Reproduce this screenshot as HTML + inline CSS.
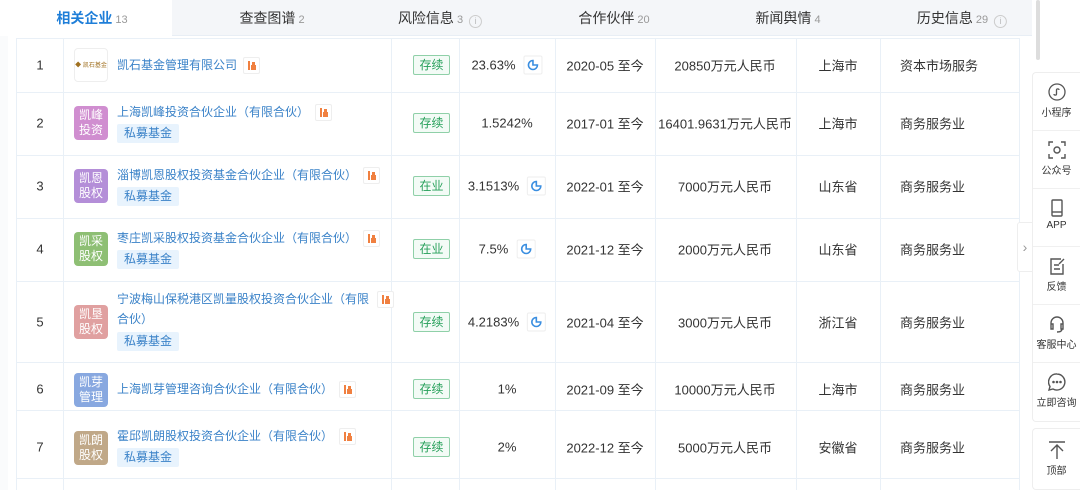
<!DOCTYPE html><html><head><meta charset="utf-8"><style>
*{margin:0;padding:0;box-sizing:border-box}
body{width:1080px;height:490px;overflow:hidden;background:#fff;font-family:"Liberation Sans","Noto Sans CJK SC",sans-serif;color:#333;font-size:13px;position:relative}
.tabs{position:absolute;left:0;top:0;width:1032px;height:36px;background:#f4f6f9;border-bottom:1px solid #e8eef5}
.tab{position:absolute;top:0;height:36px;line-height:36px;font-size:14px;color:#333;transform:translateX(-50%);white-space:nowrap}
.tab small{font-size:11px;color:#999;margin-left:3px}
.act{position:absolute;left:0;top:0;width:172px;height:37px;background:#fff}
.info{display:inline-block;width:13px;height:13px;border:1px solid #ccc;border-radius:50%;font-size:9px;line-height:11px;text-align:center;color:#bbb;margin-left:6px;vertical-align:-1px}
.vl{position:absolute;top:38px;height:452px;width:1px;background:#e9f0f7}
.hl{position:absolute;left:16px;width:1004px;height:1px;background:#e9f0f7}
.c{position:absolute;transform:translate(-50%,-50%);white-space:nowrap;display:flex;align-items:center}
.l{position:absolute;transform:translateY(-50%);white-space:nowrap}
.logo{position:absolute;left:74px;width:34px;height:34px;border-radius:4px;color:#fff;font-size:12px;line-height:15px;text-align:center;padding-top:2px}
.nm{position:absolute;left:117px;color:#3a82c8;font-size:12px;line-height:20px}
.ti{display:inline-block;width:17px;height:17px;border:1px solid #eee;border-radius:2px;vertical-align:middle;margin-left:6px;position:relative;background:#fff}
.ti:before{content:"";position:absolute;left:4px;top:3px;width:3px;height:9px;border-left:2px solid #f08040;}
.ti:after{content:"";position:absolute;left:7px;top:7px;width:5px;height:5px;background:#f08040;box-shadow:0 -4px 0 -1px #f08040}
.pf{position:absolute;left:117px;background:#e8f3fd;color:#3a82c8;font-size:12px;padding:0 7px;height:19px;line-height:19px;border-radius:2px}
.st{position:absolute;left:413px;width:37px;height:20px;border:1px solid #8fd0a8;color:#27a05a;background:#f3fbf6;font-size:12px;line-height:18px;text-align:center;border-radius:2px;transform:translateY(-50%)}
.pie{display:block;width:19px;height:19px;border:1px solid #eee;border-radius:2px;margin-left:8px;flex:none}
.pie svg{display:block;margin:3px}
.side{position:absolute;left:1032px;width:48px;background:#fff;border:1px solid #eee;border-right:none;border-radius:4px 0 0 4px}
.si{height:58px;border-bottom:1px solid #f0f0f0;text-align:center;font-size:10px;color:#333;padding-top:10px}
.si svg{display:block;margin:0 auto 3px}
</style></head><body>
<div class="tabs"><div class="act"></div>
<div class="tab" style="left:92px;color:#1e7ed8;font-weight:bold">相关企业<small style="font-weight:normal">13</small></div>
<div class="tab" style="left:272px">查查图谱<small>2</small></div>
<div class="tab" style="left:440px">风险信息<small>3</small><span class="info">i</span></div>
<div class="tab" style="left:614px">合作伙伴<small>20</small></div>
<div class="tab" style="left:788px">新闻舆情<small>4</small></div>
<div class="tab" style="left:962px">历史信息<small>29</small><span class="info">i</span></div>
</div>
<div style="position:absolute;left:0;top:36px;width:8px;height:454px;background:#fafbfc"></div>
<div class="vl" style="left:16px"></div><div class="vl" style="left:63px"></div><div class="vl" style="left:391px"></div><div class="vl" style="left:459px"></div><div class="vl" style="left:555px"></div><div class="vl" style="left:655px"></div><div class="vl" style="left:796px"></div><div class="vl" style="left:880px"></div><div class="vl" style="left:1019px"></div>
<div class="hl" style="top:38px"></div><div class="hl" style="top:92px"></div><div class="hl" style="top:155px"></div><div class="hl" style="top:218px"></div><div class="hl" style="top:281px"></div><div class="hl" style="top:362px"></div><div class="hl" style="top:410px"></div><div class="hl" style="top:478px"></div>

<div class="c" style="left:40px;top:65px">1</div>
<div class="logo" style="top:48px;border:1px solid #eee;background:#fff;color:#a07020;font-size:6px;line-height:30px">◆ 凯石基金</div>
<div class="nm" style="top:55px">凯石基金管理有限公司<span class="ti"></span></div>
<div class="st" style="top:65px">存续</div>
<div class="c" style="left:507px;top:65px">23.63%<span class="pie"><svg width="11" height="11" viewBox="0 0 11 11" fill="none" stroke="#3a8ee0" stroke-width="1.6"><path d="M5.5 1a4.5 4.5 0 1 0 4.5 4.5H5.5z"/></svg></span></div>
<div class="c" style="left:605px;top:65px">2020-05 至今</div>
<div class="c" style="left:725px;top:65px">20850万元人民币</div>
<div class="c" style="left:838px;top:65px">上海市</div>
<div class="l" style="left:900px;top:65px">资本市场服务</div>

<div class="c" style="left:40px;top:123px">2</div>
<div class="logo" style="top:106px;background:#d08ed0">凯峰<br>投资</div>
<div class="nm" style="top:102px">上海凯峰投资合伙企业（有限合伙）<span class="ti"></span></div>
<div class="pf" style="top:124px">私募基金</div>
<div class="st" style="top:123px">存续</div>
<div class="c" style="left:507px;top:123px">1.5242%</div>
<div class="c" style="left:605px;top:123px">2017-01 至今</div>
<div class="c" style="left:725px;top:123px">16401.9631万元人民币</div>
<div class="c" style="left:838px;top:123px">上海市</div>
<div class="l" style="left:900px;top:123px">商务服务业</div>

<div class="c" style="left:40px;top:186px">3</div>
<div class="logo" style="top:169px;background:#b48ed8">凯恩<br>股权</div>
<div class="nm" style="top:165px">淄博凯恩股权投资基金合伙企业（有限合伙）<span class="ti"></span></div>
<div class="pf" style="top:187px">私募基金</div>
<div class="st" style="top:186px">在业</div>
<div class="c" style="left:507px;top:186px">3.1513%<span class="pie"><svg width="11" height="11" viewBox="0 0 11 11" fill="none" stroke="#3a8ee0" stroke-width="1.6"><path d="M5.5 1a4.5 4.5 0 1 0 4.5 4.5H5.5z"/></svg></span></div>
<div class="c" style="left:605px;top:186px">2022-01 至今</div>
<div class="c" style="left:725px;top:186px">7000万元人民币</div>
<div class="c" style="left:838px;top:186px">山东省</div>
<div class="l" style="left:900px;top:186px">商务服务业</div>

<div class="c" style="left:40px;top:249px">4</div>
<div class="logo" style="top:232px;background:#8ebf74">凯采<br>股权</div>
<div class="nm" style="top:228px">枣庄凯采股权投资基金合伙企业（有限合伙）<span class="ti"></span></div>
<div class="pf" style="top:250px">私募基金</div>
<div class="st" style="top:249px">在业</div>
<div class="c" style="left:507px;top:249px">7.5%<span class="pie"><svg width="11" height="11" viewBox="0 0 11 11" fill="none" stroke="#3a8ee0" stroke-width="1.6"><path d="M5.5 1a4.5 4.5 0 1 0 4.5 4.5H5.5z"/></svg></span></div>
<div class="c" style="left:605px;top:249px">2021-12 至今</div>
<div class="c" style="left:725px;top:249px">2000万元人民币</div>
<div class="c" style="left:838px;top:249px">山东省</div>
<div class="l" style="left:900px;top:249px">商务服务业</div>

<div class="c" style="left:40px;top:322px">5</div>
<div class="logo" style="top:305px;background:#e0a0a0">凯垦<br>股权</div>
<div class="nm" style="top:289px;width:256px;white-space:normal">宁波梅山保税港区凯量股权投资合伙企业（有限合伙）</div>
<span class="ti" style="position:absolute;left:377px;top:291px;margin:0"></span>
<div class="pf" style="top:332px">私募基金</div>
<div class="st" style="top:322px">存续</div>
<div class="c" style="left:507px;top:322px">4.2183%<span class="pie"><svg width="11" height="11" viewBox="0 0 11 11" fill="none" stroke="#3a8ee0" stroke-width="1.6"><path d="M5.5 1a4.5 4.5 0 1 0 4.5 4.5H5.5z"/></svg></span></div>
<div class="c" style="left:605px;top:322px">2021-04 至今</div>
<div class="c" style="left:725px;top:322px">3000万元人民币</div>
<div class="c" style="left:838px;top:322px">浙江省</div>
<div class="l" style="left:900px;top:322px">商务服务业</div>

<div class="c" style="left:40px;top:389px">6</div>
<div class="logo" style="top:373px;background:#88a8e0">凯芽<br>管理</div>
<div class="nm" style="top:379px">上海凯芽管理咨询合伙企业（有限合伙）<span class="ti"></span></div>
<div class="st" style="top:389px">存续</div>
<div class="c" style="left:507px;top:389px">1%</div>
<div class="c" style="left:605px;top:389px">2021-09 至今</div>
<div class="c" style="left:725px;top:389px">10000万元人民币</div>
<div class="c" style="left:838px;top:389px">上海市</div>
<div class="l" style="left:900px;top:389px">商务服务业</div>

<div class="c" style="left:40px;top:447px">7</div>
<div class="logo" style="top:431px;background:#c0a888">凯朗<br>股权</div>
<div class="nm" style="top:426px">霍邱凯朗股权投资合伙企业（有限合伙）<span class="ti"></span></div>
<div class="pf" style="top:448px">私募基金</div>
<div class="st" style="top:447px">存续</div>
<div class="c" style="left:507px;top:447px">2%</div>
<div class="c" style="left:605px;top:447px">2022-12 至今</div>
<div class="c" style="left:725px;top:447px">5000万元人民币</div>
<div class="c" style="left:838px;top:447px">安徽省</div>
<div class="l" style="left:900px;top:447px">商务服务业</div>

<div style="position:absolute;left:1036px;top:0;width:4px;height:60px;background:#ddd;border-radius:2px"></div>
<div style="position:absolute;left:1017px;top:222px;width:16px;height:50px;background:#fff;border:1px solid #eee;border-radius:3px 0 0 3px;color:#999;font-size:14px;line-height:48px;text-align:center">›</div>
<div class="side" style="top:72px;height:350px">
<div class="si"><svg width="18" height="18" viewBox="0 0 18 18" fill="none" stroke="#555" stroke-width="1.3"><circle cx="9" cy="9" r="8"/><path d="M6 11c0 1.5 2.5 1.5 2.5 0V7c0-1.5 2.5-1.5 2.5 0"/></svg>小程序</div>
<div class="si"><svg width="18" height="18" viewBox="0 0 18 18" fill="none" stroke="#555" stroke-width="1.4"><path d="M1 5V1h4M13 1h4v4M17 13v4h-4M5 17H1v-4"/><circle cx="9" cy="9" r="3"/></svg>公众号</div>
<div class="si"><svg width="18" height="18" viewBox="0 0 18 18" fill="none" stroke="#555" stroke-width="1.4"><rect x="4" y="1" width="10" height="16" rx="1"/><path d="M4 13h10"/></svg>APP</div>
<div class="si"><svg width="18" height="18" viewBox="0 0 18 18" fill="none" stroke="#555" stroke-width="1.4"><path d="M13 2H3v15h12V7M6 8h5M6 12h6M11 7l5-5"/></svg>反馈</div>
<div class="si"><svg width="18" height="18" viewBox="0 0 18 18" fill="none" stroke="#555" stroke-width="1.4"><path d="M3 11V8a6 6 0 0 1 12 0v3M3 9h2v5H3zM13 9h2v5h-2zM14 14c0 2-2 3-5 3"/></svg>客服中心</div>
<div class="si" style="border:none"><svg width="18" height="18" viewBox="0 0 18 18" fill="none" stroke="#555" stroke-width="1.4"><path d="M9 1a8 8 0 1 1-4 15l-4 1 1-3.5A8 8 0 0 1 9 1z"/><circle cx="5.5" cy="9" r=".6" fill="#555"/><circle cx="9" cy="9" r=".6" fill="#555"/><circle cx="12.5" cy="9" r=".6" fill="#555"/></svg>立即咨询</div>
</div>
<div class="side" style="top:428px;height:62px"><div class="si" style="border:none;padding-top:12px"><svg width="18" height="18" viewBox="0 0 18 18" fill="none" stroke="#555" stroke-width="1.4"><path d="M1 1h16M9 4v14M3 10l6-6 6 6"/></svg>顶部</div></div>
</body></html>
